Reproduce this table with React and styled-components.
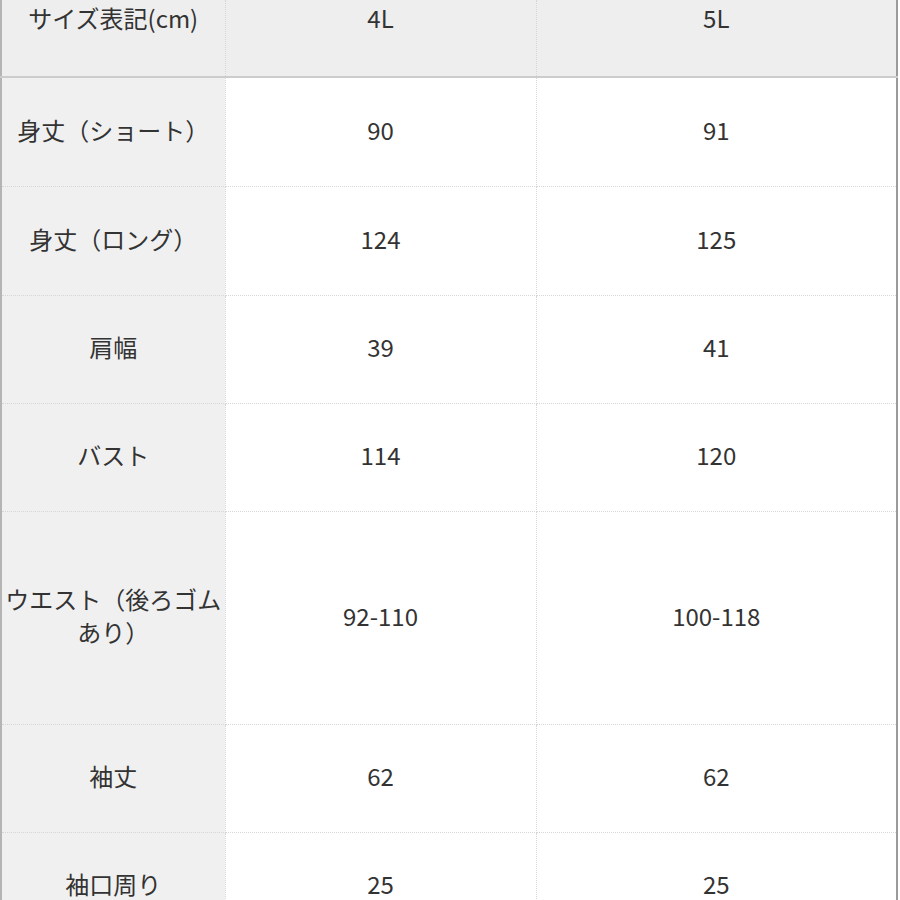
import React from 'react';
import styled, { createGlobalStyle } from 'styled-components';

const GlobalStyle = createGlobalStyle`
  html, body {
    margin: 0;
    padding: 0;
    background: #ffffff;
  }
  body {
    font-family: "Noto Sans CJK JP", "Noto Sans", sans-serif;
    color: #333333;
  }
`;

const Page = styled.div`
  width: 900px;
  height: 900px;
  overflow: hidden;
  background: #ffffff;
`;

const Table = styled.table`
  width: 898px;
  table-layout: fixed;
  border-collapse: collapse;
  border-left: 2px solid #b4b4b4;
  border-right: 2px solid #9a9a9a;
  font-size: 24px;
  line-height: 33px;
`;

const HeadCell = styled.th`
  height: 77px;
  padding: 1px 2px 0;
  box-sizing: border-box;
  vertical-align: top;
  text-align: center;
  font-weight: 400;
  background: #eeeeee;
  border-bottom: 2px solid #cccccc;
  border-right: 1px dotted #d6d6d6;
`;

const LabelCell = styled.th`
  height: ${p => p.$h}px;
  padding: 0 2px 5px;
  box-sizing: border-box;
  text-align: center;
  vertical-align: middle;
  font-weight: 400;
  background: #f0f0f0;
  border-bottom: 1px dotted #d6d6d6;
  border-right: 1px dotted #d6d6d6;
`;

const ValueCell = styled.td`
  height: ${p => p.$h}px;
  padding: 0 2px 5px;
  box-sizing: border-box;
  text-align: center;
  vertical-align: middle;
  background: #ffffff;
  border-bottom: 1px dotted #d6d6d6;
  border-right: 1px dotted #d6d6d6;
`;

const rows = [
  { label: '身丈（ショート）', a: '90', b: '91', h: 109 },
  { label: '身丈（ロング）', a: '124', b: '125', h: 109 },
  { label: '肩幅', a: '39', b: '41', h: 108 },
  { label: 'バスト', a: '114', b: '120', h: 108 },
  { label: 'ウエスト（後ろゴムあり）', a: '92-110', b: '100-118', h: 213 },
  { label: '袖丈', a: '62', b: '62', h: 108 },
  { label: '袖口周り', a: '25', b: '25', h: 108 },
];

export default function App() {
  return (
    <Page>
      <GlobalStyle />
      <Table>
        <colgroup>
          <col style={{ width: 224 }} />
          <col style={{ width: 311 }} />
          <col />
        </colgroup>
        <thead>
          <tr>
            <HeadCell>サイズ表記(cm)</HeadCell>
            <HeadCell>4L</HeadCell>
            <HeadCell>5L</HeadCell>
          </tr>
        </thead>
        <tbody>
          {rows.map(r => (
            <tr key={r.label}>
              <LabelCell $h={r.h}>{r.label}</LabelCell>
              <ValueCell $h={r.h}>{r.a}</ValueCell>
              <ValueCell $h={r.h}>{r.b}</ValueCell>
            </tr>
          ))}
        </tbody>
      </Table>
    </Page>
  );
}
